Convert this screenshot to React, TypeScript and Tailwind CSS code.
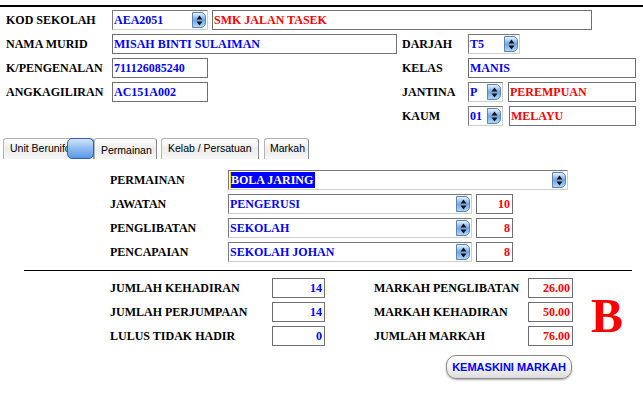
import React from "react";

const serif = "font-['Liberation_Serif','Times_New_Roman',serif] font-bold text-[12px] leading-none";

function Spin() {
  return (
    <span className="mr-[1px] flex w-[14px] shrink-0 items-center justify-center rounded-r-[5px] border border-[#5a82b4] bg-linear-to-b from-[#e8f2fd] via-[#6ea6e8] to-[#b3d6f7]">
      <svg width="7" height="11" viewBox="0 0 7 11">
        <path d="M3.5 0.5L6.5 4.5H0.5z M3.5 10.5L0.5 6.5h6z" fill="#111" />
      </svg>
    </span>
  );
}

function Select({
  className,
  value,
  highlight,
}: {
  className: string;
  value: string;
  highlight?: boolean;
}) {
  return (
    <div
      className={`flex h-5 items-stretch border border-[#7a7a7a] border-r-[#cfcfcf] border-b-[#cfcfcf] bg-white py-[1px] ${className}`}
    >
      <span className="flex flex-1 items-center overflow-hidden pl-[1px]">
        {highlight ? (
          <span className={`${serif} flex h-[16px] items-center border-l border-[#ffd800] bg-[#0000ff] pr-[2px] text-white`}>
            {value}
          </span>
        ) : (
          <span className={`${serif} text-[#0000ff]`}>{value}</span>
        )}
      </span>
      <Spin />
    </div>
  );
}

function Box({
  className,
  value,
  color = "text-[#0000ff]",
  right,
}: {
  className: string;
  value: string;
  color?: string;
  right?: boolean;
}) {
  return (
    <div
      className={`flex h-5 items-center border border-[#707070] bg-white ${right ? "justify-end pr-[2px]" : "pl-[1px]"} ${className}`}
    >
      <span className={`${serif} ${color} whitespace-nowrap`}>{value}</span>
    </div>
  );
}

function Label({ className, children }: { className: string; children: React.ReactNode }) {
  return <span className={`${serif} shrink-0 whitespace-nowrap text-black ${className}`}>{children}</span>;
}

function Tab({ className, children }: { className: string; children: React.ReactNode }) {
  return (
    <div
      className={`flex h-[21px] items-center overflow-hidden whitespace-nowrap rounded-t-[3px] border border-b-0 border-[#b4b4b4] border-r-[#8a8a8a] bg-linear-to-b from-white via-[#ececec] to-[#f6f6f6] font-['Liberation_Sans',Arial,sans-serif] text-[10.5px] text-black ${className}`}
    >
      {children}
    </div>
  );
}

export default function App() {
  const red = "text-[#ff0000]";
  return (
    <div className="h-[401px] w-[643px] overflow-hidden bg-white">
      <div className="mt-[5px] h-[2px] w-full bg-black" />

      {/* datos del alumno */}
      <div className="mt-[3px] flex flex-col gap-1 pl-[6px]">
        <div className="flex items-center">
          <Label className="w-[106px]">KOD SEKOLAH</Label>
          <Select className="w-[96px]" value="AEA2051" />
          <Box className="ml-1 w-[380px]" value="SMK JALAN TASEK" color={red} />
        </div>
        <div className="flex items-center">
          <Label className="w-[106px]">NAMA MURID</Label>
          <Box className="w-[285px]" value="MISAH BINTI SULAIMAN" />
          <Label className="ml-[5px] w-[66px]">DARJAH</Label>
          <Select className="w-[52px]" value="T5" />
        </div>
        <div className="flex items-center">
          <Label className="w-[106px]">K/PENGENALAN</Label>
          <Box className="w-[96px]" value="711126085240" />
          <Label className="ml-[194px] w-[66px]">KELAS</Label>
          <Box className="w-[168px]" value="MANIS" />
        </div>
        <div className="flex items-center">
          <Label className="w-[106px]">ANGKAGILIRAN</Label>
          <Box className="w-[96px]" value="AC151A002" />
          <Label className="ml-[194px] w-[66px]">JANTINA</Label>
          <Select className="w-[35px]" value="P" />
          <Box className="ml-[5px] w-[128px]" value="PEREMPUAN" color={red} />
        </div>
        <div className="flex items-center">
          <Label className="ml-[396px] w-[66px]">KAUM</Label>
          <Select className="w-[35px]" value="01" />
          <Box className="ml-[6px] w-[127px]" value="MELAYU" color={red} />
        </div>
      </div>

      {/* pestañas */}
      <div className="relative mt-[12px] flex items-end pl-[3px]">
        <Tab className="w-[91px] pl-[6px]">Unit Berunifo</Tab>
        <Tab className="w-[63px] pl-[6px] pt-[3px]">Permainan</Tab>
        <Tab className="ml-1 w-[98px] pl-[6px]">Kelab / Persatuan</Tab>
        <Tab className="ml-[5px] w-[45px] pl-[5px]">Markah</Tab>
        <div className="absolute left-[67px] top-0 h-[21px] w-[27px] rounded-[5px] border border-[#2f5fc4] bg-linear-to-b from-[#d2e4f9] via-[#8dbbef] to-[#5d98e6]" />
      </div>

      {/* permainan */}
      <div className="mt-[11px] flex flex-col gap-1 pl-[110px]">
        <div className="flex items-center">
          <Label className="w-[118px]">PERMAINAN</Label>
          <Select className="w-[340px]" value="BOLA JARING" highlight />
        </div>
        <div className="flex items-center">
          <Label className="w-[118px]">JAWATAN</Label>
          <Select className="w-[244px]" value="PENGERUSI" />
          <Box className="ml-1 w-[37px]" value="10" color={red} right />
        </div>
        <div className="flex items-center">
          <Label className="w-[118px]">PENGLIBATAN</Label>
          <Select className="w-[244px]" value="SEKOLAH" />
          <Box className="ml-1 w-[37px]" value="8" color={red} right />
        </div>
        <div className="flex items-center">
          <Label className="w-[118px]">PENCAPAIAN</Label>
          <Select className="w-[244px]" value="SEKOLAH JOHAN" />
          <Box className="ml-1 w-[37px]" value="8" color={red} right />
        </div>
      </div>

      <div className="ml-[24px] mt-[8px] h-px w-[608px] bg-black" />

      {/* markah */}
      <div className="mt-[7px] flex pl-[110px]">
        <div className="flex flex-col gap-1">
          <div className="flex items-center">
            <Label className="w-[162px]">JUMLAH KEHADIRAN</Label>
            <Box className="w-[53px]" value="14" right />
            <Label className="ml-[49px] w-[154px]">MARKAH PENGLIBATAN</Label>
            <Box className="w-[45px]" value="26.00" color={red} right />
          </div>
          <div className="flex items-center">
            <Label className="w-[162px]">JUMLAH PERJUMPAAN</Label>
            <Box className="w-[53px]" value="14" right />
            <Label className="ml-[49px] w-[154px]">MARKAH KEHADIRAN</Label>
            <Box className="w-[45px]" value="50.00" color={red} right />
          </div>
          <div className="flex items-center">
            <Label className="w-[162px]">LULUS TIDAK HADIR</Label>
            <Box className="w-[53px]" value="0" right />
            <Label className="ml-[49px] w-[154px]">JUMLAH MARKAH</Label>
            <Box className="w-[45px]" value="76.00" color={red} right />
          </div>
        </div>
        <span className="ml-[18px] mt-[14px] font-['Liberation_Serif','Times_New_Roman',serif] text-[48px] font-bold leading-none text-[#ff0000]">
          B
        </span>
      </div>

      <div className="mt-[9px] pl-[446px]">
        <button
          type="button"
          className="flex h-[24px] w-[126px] items-center justify-center rounded-[10px] border border-[#8a8a8a] bg-linear-to-b from-white via-[#f4f4f4] to-[#dcdcdc] font-['Liberation_Sans',Arial,sans-serif] text-[11px] font-bold text-[#0000ff] shadow-[0_1px_2px_rgba(0,0,0,0.35)]"
        >
          KEMASKINI MARKAH
        </button>
      </div>
    </div>
  );
}
